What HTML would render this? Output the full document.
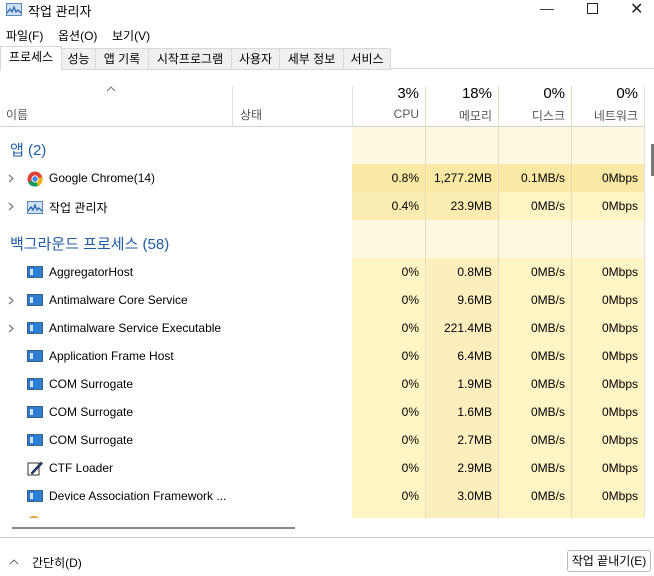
<!DOCTYPE html>
<html><head><meta charset="utf-8"><style>
body{margin:0;width:654px;height:576px;background:#fff;font-family:"Liberation Sans","Noto Sans CJK KR",sans-serif;font-size:12px;color:#000;position:relative;overflow:hidden}
.a{position:absolute;white-space:nowrap}
.tab{position:absolute;top:48px;height:20px;border:1px solid #d9d9d9;background:#f0f0f0;line-height:20px;text-align:center;font-size:12px}
.col{position:absolute;top:86px;height:432px}
.cell{position:absolute;height:28px;line-height:28px;text-align:right;font-size:12px;color:#000}
.ic{position:absolute;width:16px;height:12px;border:1px solid #3a5e8a;background:#2d7dd2;box-sizing:border-box}
.ic:after{content:"";position:absolute;left:2px;top:2px;width:3px;height:6px;background:#cfe3f7}
.chev{position:absolute;left:8px;width:6px;height:9px}
</style></head><body>
<svg class="a" style="left:6px;top:3px" width="16" height="14"><rect x="0.5" y="0.5" width="15" height="12" fill="#cfe2f5" stroke="#5a88b8"/><polyline points="1,10 4,6 6,9 8,4 10,9 12,7 15,10" fill="none" stroke="#2a66b0" stroke-width="1.3"/></svg>
<div class="a" style="left:28px;top:1px;font-size:13px">작업 관리자</div>
<div class="a" style="left:540px;top:0;font-size:14px;color:#333">—</div>
<div class="a" style="left:587px;top:3px;width:9px;height:9px;border:1px solid #222"></div>
<div class="a" style="left:630px;top:-1px;font-size:16px;color:#222">✕</div>
<div class="a" style="left:6px;top:27px">파일(F)</div>
<div class="a" style="left:58px;top:27px">옵션(O)</div>
<div class="a" style="left:112px;top:27px">보기(V)</div>
<div class="a" style="left:0;top:68px;width:654px;height:1px;background:#d9d9d9"></div>
<div class="tab" style="left:0;width:60px;background:#fff;border-bottom-color:#fff;top:46px;height:23px">프로세스</div>
<div class="tab" style="left:61px;width:33px">성능</div>
<div class="tab" style="left:95px;width:52px">앱 기록</div>
<div class="tab" style="left:148px;width:82px">시작프로그램</div>
<div class="tab" style="left:231px;width:47px">사용자</div>
<div class="tab" style="left:279px;width:63px">세부 정보</div>
<div class="tab" style="left:343px;width:46px">서비스</div>
<svg class="a" style="left:106px;top:86px" width="10" height="6"><polyline points="1,5 5,1 9,5" fill="none" stroke="#777" stroke-width="1"/></svg>
<div class="a" style="left:232px;top:86px;width:1px;height:40px;background:#e0e0e0"></div>
<div class="a" style="left:352px;top:86px;width:1px;height:40px;background:#e0e0e0"></div>
<div class="a" style="left:6px;top:106px;color:#555">이름</div>
<div class="a" style="left:240px;top:106px;color:#555">상태</div>
<div class="a" style="left:0;top:126px;width:644px;height:1px;background:#d0d0d0"></div>
<div class="col" style="left:352px;width:292px;background:#fff4c4;top:127px;height:391px"></div>
<div class="a" style="left:352px;top:127px;width:292px;height:37px;background:#fff8e0"></div>
<div class="a" style="left:352px;top:220px;width:292px;height:38px;background:#fff8e0"></div>
<div class="a" style="left:425px;top:258px;width:73px;height:260px;background:#fcefbd"></div>
<div class="a" style="left:352px;top:164px;width:292px;height:28px;background:#f9e9a4"></div>
<div class="a" style="left:352px;top:192px;width:146px;height:28px;background:#fbedb2"></div>
<div class="a" style="left:425px;top:86px;width:1px;height:432px;background:#e6dcc0"></div>
<div class="a" style="left:498px;top:86px;width:1px;height:432px;background:#e6dcc0"></div>
<div class="a" style="left:571px;top:86px;width:1px;height:432px;background:#e6dcc0"></div>
<div class="a" style="left:644px;top:86px;width:1px;height:432px;background:#e0e0e0"></div>
<div class="a" style="left:352px;width:67px;top:85px;text-align:right;font-size:15px">3%</div>
<div class="a" style="left:425px;width:67px;top:85px;text-align:right;font-size:15px">18%</div>
<div class="a" style="left:498px;width:67px;top:85px;text-align:right;font-size:15px">0%</div>
<div class="a" style="left:571px;width:67px;top:85px;text-align:right;font-size:15px">0%</div>
<div class="a" style="left:352px;width:67px;top:107px;text-align:right;color:#555">CPU</div>
<div class="a" style="left:425px;width:67px;top:107px;text-align:right;color:#555">메모리</div>
<div class="a" style="left:498px;width:67px;top:107px;text-align:right;color:#555">디스크</div>
<div class="a" style="left:571px;width:67px;top:107px;text-align:right;color:#555">네트워크</div>
<div class="a" style="left:651px;top:144px;width:3px;height:32px;background:#777"></div>
<div class="a" style="left:10px;top:139px;font-size:15px;color:#1f5ba8">앱 (2)</div>
<div class="a" style="left:10px;top:233px;font-size:15px;color:#1f5ba8">백그라운드 프로세스 (58)</div>
<svg class="chev" style="top:174px" viewBox="0 0 6 9"><polyline points="1,1 5,4.5 1,8" fill="none" stroke="#777" stroke-width="1.2"/></svg>
<svg class="a" style="left:27px;top:171px" width="16" height="16" viewBox="0 0 16 16"><circle cx="8" cy="8" r="7.5" fill="#db4437"/><path d="M8 8 L1.2 11.5 A7.5 7.5 0 0 0 14.5 11.5 Z" fill="#0f9d58"/><path d="M8 8 L15 6 A7.5 7.5 0 0 1 11 15 Z" fill="#f4b400"/><circle cx="8" cy="8" r="3.6" fill="#fff"/><circle cx="8" cy="8" r="2.7" fill="#4285f4"/></svg>
<div class="a" style="left:49px;top:171px">Google Chrome(14)</div>
<svg class="chev" style="top:202px" viewBox="0 0 6 9"><polyline points="1,1 5,4.5 1,8" fill="none" stroke="#777" stroke-width="1.2"/></svg>
<svg class="a" style="left:27px;top:201px" width="16" height="13"><rect x="0.5" y="0.5" width="15" height="12" fill="#cfe2f5" stroke="#5a88b8"/><polyline points="1,10 4,6 6,9 8,4 10,9 12,7 15,10" fill="none" stroke="#2a66b0" stroke-width="1.3"/></svg>
<div class="a" style="left:49px;top:199px">작업 관리자</div>
<div class="cell" style="left:352px;width:67px;top:164px">0.8%</div>
<div class="cell" style="left:425px;width:67px;top:164px">1,277.2MB</div>
<div class="cell" style="left:498px;width:67px;top:164px">0.1MB/s</div>
<div class="cell" style="left:571px;width:67px;top:164px">0Mbps</div>
<div class="cell" style="left:352px;width:67px;top:192px">0.4%</div>
<div class="cell" style="left:425px;width:67px;top:192px">23.9MB</div>
<div class="cell" style="left:498px;width:67px;top:192px">0MB/s</div>
<div class="cell" style="left:571px;width:67px;top:192px">0Mbps</div>
<div style="position:absolute;left:0;top:258px;width:644px;height:260px;overflow:hidden">
<div class="ic" style="left:27px;top:8px"></div><div class="a" style="left:49px;top:7px">AggregatorHost</div>
<svg class="chev" style="top:38px" viewBox="0 0 6 9"><polyline points="1,1 5,4.5 1,8" fill="none" stroke="#777" stroke-width="1.2"/></svg><div class="ic" style="left:27px;top:36px"></div><div class="a" style="left:49px;top:35px">Antimalware Core Service</div>
<svg class="chev" style="top:66px" viewBox="0 0 6 9"><polyline points="1,1 5,4.5 1,8" fill="none" stroke="#777" stroke-width="1.2"/></svg><div class="ic" style="left:27px;top:64px"></div><div class="a" style="left:49px;top:63px">Antimalware Service Executable</div>
<div class="ic" style="left:27px;top:92px"></div><div class="a" style="left:49px;top:91px">Application Frame Host</div>
<div class="ic" style="left:27px;top:120px"></div><div class="a" style="left:49px;top:119px">COM Surrogate</div>
<div class="ic" style="left:27px;top:148px"></div><div class="a" style="left:49px;top:147px">COM Surrogate</div>
<div class="ic" style="left:27px;top:176px"></div><div class="a" style="left:49px;top:175px">COM Surrogate</div>
<svg class="a" style="left:27px;top:202px" width="16" height="16"><rect x="1" y="3" width="11" height="12" fill="#fff" stroke="#333"/><path d="M4 13 L14 2 L15.5 3.5 L5.5 14 Z" fill="#2a4fa8" stroke="#111" stroke-width="0.6"/></svg><div class="a" style="left:49px;top:203px">CTF Loader</div>
<div class="ic" style="left:27px;top:232px"></div><div class="a" style="left:49px;top:231px">Device Association Framework ...</div>
<div class="a" style="left:27px;top:258px;width:14px;height:14px;border-radius:7px;background:#e8a030"></div>
<div style="position:absolute;left:352px;width:67px;top:0;text-align:right;line-height:28px">0%<br>0%<br>0%<br>0%<br>0%<br>0%<br>0%<br>0%<br>0%</div>
<div style="position:absolute;left:425px;width:67px;top:0;text-align:right;line-height:28px">0.8MB<br>9.6MB<br>221.4MB<br>6.4MB<br>1.9MB<br>1.6MB<br>2.7MB<br>2.9MB<br>3.0MB</div>
<div style="position:absolute;left:498px;width:67px;top:0;text-align:right;line-height:28px">0MB/s<br>0MB/s<br>0MB/s<br>0MB/s<br>0MB/s<br>0MB/s<br>0MB/s<br>0MB/s<br>0MB/s</div>
<div style="position:absolute;left:571px;width:67px;top:0;text-align:right;line-height:28px">0Mbps<br>0Mbps<br>0Mbps<br>0Mbps<br>0Mbps<br>0Mbps<br>0Mbps<br>0Mbps<br>0Mbps</div>
</div>
<div class="a" style="left:0;top:518px;width:654px;height:19px;background:#fff"></div>
<div class="a" style="left:12px;top:527px;width:283px;height:2px;background:#888"></div>
<div class="a" style="left:0;top:537px;width:654px;height:1px;background:#ccc"></div>
<svg class="a" style="left:9px;top:559px" width="10" height="6"><polyline points="1,5 5,1 9,5" fill="none" stroke="#666" stroke-width="1"/></svg>
<div class="a" style="left:32px;top:554px">간단히(D)</div>
<div class="a" style="left:567px;top:550px;width:84px;height:22px;border:1px solid #bbb;border-radius:3px;box-sizing:border-box;line-height:20px;text-align:center;background:#fdfdfd">작업 끝내기(E)</div>
</body></html>
